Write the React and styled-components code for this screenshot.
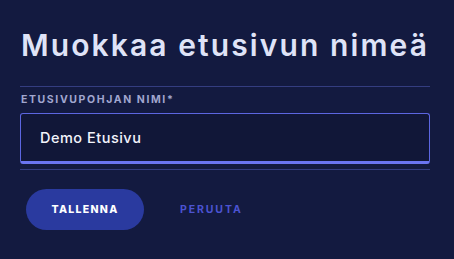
import React, { useEffect, useRef } from "react";
import styled, { createGlobalStyle } from "styled-components";

const Global = createGlobalStyle`
  html, body { margin: 0; padding: 0; background: #131a40; }
  body { font-family: Inter, "Open Sans", sans-serif; }
`;

const Page = styled.div`
  width: 454px;
  height: 259px;
  box-sizing: border-box;
  padding: 27px 24px 0 20px;
  background: #131a40;
`;

const Title = styled.h1`
  margin: 0 0 0 1px;
  font-size: 30px;
  line-height: 36px;
  font-weight: 600;
  letter-spacing: 2.1px;
  color: #dfe3f7;
`;

const Rule = styled.div`
  height: 1px;
  background: #343d80;
  margin-top: ${(p) => p.$top}px;
`;

const Label = styled.label`
  display: block;
  margin: 7px 0 0 1px;
  font-size: 10.5px;
  line-height: 12px;
  font-weight: 700;
  letter-spacing: 1.6px;
  color: #a1a6cf;
`;

const Field = styled.div`
  margin-top: 7px;
  height: 51px;
  box-sizing: border-box;
  border: 1px solid #5c66e0;
  border-bottom: 3px solid #6b75f2;
  border-radius: 3px;
  background: #111738;
  display: flex;
  align-items: center;
  padding: 0 0 0 19px;
`;

const Input = styled.input`
  flex: 1;
  background: transparent;
  border: none;
  outline: none;
  padding: 0;
  font-family: Inter, sans-serif;
  font-size: 14.5px;
  font-weight: 500;
  letter-spacing: 0.5px;
  color: #f2f3fb;
  caret-color: #ffffff;
`;

const Actions = styled.div`
  display: flex;
  align-items: center;
  gap: 36px;
  margin: 19px 0 0 6px;
`;

const Primary = styled.button`
  width: 118px;
  height: 41px;
  border-radius: 21px;
  border: none;
  background: #2a3a9f;
  color: #ffffff;
  font-family: Inter, sans-serif;
  font-size: 10.5px;
  font-weight: 800;
  letter-spacing: 1.3px;
  cursor: pointer;
`;

const Ghost = styled.button`
  background: none;
  border: none;
  padding: 0;
  color: #4b53d1;
  font-family: Inter, sans-serif;
  font-size: 10.5px;
  font-weight: 700;
  letter-spacing: 1.9px;
  cursor: pointer;
`;

export default function App() {
  const ref = useRef(null);
  useEffect(() => {
    const el = ref.current;
    if (el) {
      el.focus();
      const n = el.value.length;
      el.setSelectionRange(n, n);
    }
  }, []);
  return (
    <>
      <Global />
      <Page>
        <Title>Muokkaa etusivun nimeä</Title>
        <Rule $top={23} />
        <Label>ETUSIVUPOHJAN NIMI*</Label>
        <Field>
          <Input ref={ref} defaultValue="Demo Etusivu" />
        </Field>
        <Rule $top={5} />
        <Actions>
          <Primary>TALLENNA</Primary>
          <Ghost>PERUUTA</Ghost>
        </Actions>
      </Page>
    </>
  );
}
